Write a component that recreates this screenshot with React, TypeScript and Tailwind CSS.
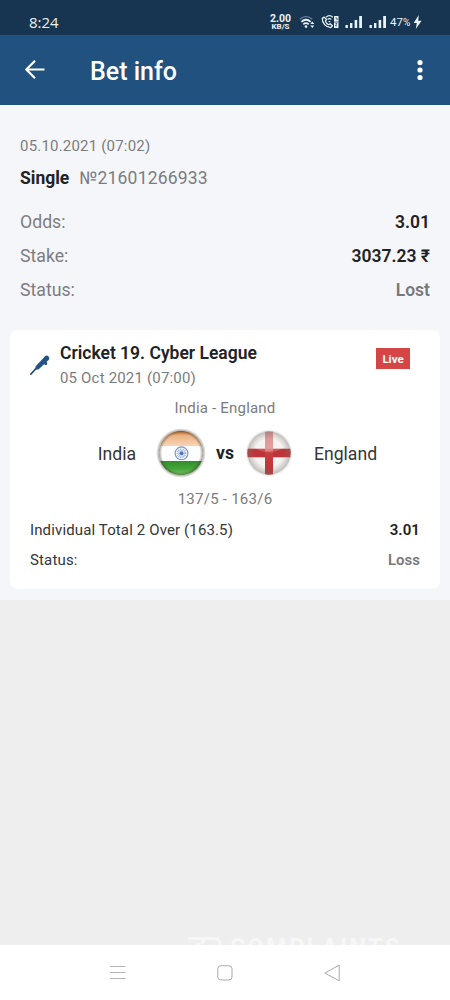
import type { ReactNode } from 'react';

function StatusBar() {
  return (
    <div className="h-[35px] bg-[#173451] text-[#e6f3f7] flex items-center pl-[29px] pr-[28px] pt-[9px]">
      <span className="font-['Open_Sans'] text-[15px] leading-[26px]">8:24</span>
      <div className="ml-auto flex items-center">
        <div className="w-[21px] mr-[8px] flex flex-col items-center font-bold whitespace-nowrap">
          <span className="text-[10.5px] leading-[9px]">2.00</span>
          <span className="text-[8px] leading-[8px]">KB/S</span>
        </div>
        <WifiIcon />
        <CallIcon />
        <SignalIcon />
        <SignalIcon />
        <span className="-ml-[3px] w-[23px] text-[11.5px] leading-[26px] whitespace-nowrap">
          47<span className="text-[10px]">%</span>
        </span>
        <svg width="9" height="16" viewBox="0 0 9 16" className="shrink-0">
          <path d="M5.8 1 0.6 9h3.2L2.8 15 8.6 6.8H5.2z" fill="currentColor" />
        </svg>
      </div>
    </div>
  );
}

function WifiIcon() {
  return (
    <svg width="16" height="14" viewBox="0 0 16 14" className="mr-[6px] shrink-0" fill="none" stroke="currentColor">
      <path d="M0.8 4.2C4.5 0.8 9.5 0.8 13.2 4.2" strokeWidth="1.3" opacity="0.4" />
      <path d="M2.4 6.8C5.3 4.2 8.8 4.2 11.7 6.8M4.3 9.3c1.8-1.6 3.6-1.6 5.4 0" strokeWidth="1.8" />
      <circle cx="7" cy="11.6" r="1.3" fill="currentColor" stroke="none" />
      <path d="M13.3 6.6l2 2.5h-4zM13.3 13l2-2.5h-4z" fill="currentColor" stroke="none" />
    </svg>
  );
}

function CallIcon() {
  return (
    <svg width="18" height="14" viewBox="0 0 18 14" className="mr-[6px] shrink-0" fill="none" stroke="currentColor">
      <path
        d="M3.2 2.1 1.3 3.4C1 7.8 5 12.4 9.7 12.6l1.7-1.9-2.2-2-1.7 1C6 8.9 4.9 7.6 4.4 6.1l1.1-1.6z"
        strokeWidth="1.3"
        strokeLinejoin="round"
      />
      <path d="M5 2.2c2.1-1.8 4.7-1.8 6.8 0M6.5 4.4c1.2-1 2.6-1 3.8 0" strokeWidth="1.2" />
      <path d="M8.4 7.4 7.1 5.9h2.6z" fill="currentColor" stroke="none" />
      <rect x="13" y="1" width="4.5" height="12" rx="0.5" fill="currentColor" stroke="none" />
      <path d="M14.5 3h1.5v2.2M14.4 8.4h1.6l-1.6 2.4H16M13 7h4.5" stroke="#173451" strokeWidth="0.7" />
    </svg>
  );
}

function SignalIcon() {
  return (
    <svg width="18" height="14" viewBox="0 0 18 14" className="mr-[6px] shrink-0" fill="currentColor">
      <rect x="0.5" y="10" width="2.4" height="3" />
      <rect x="5" y="8" width="2.4" height="5" />
      <rect x="9.6" y="5" width="2.6" height="8" />
      <rect x="14.2" y="1" width="2.8" height="12" />
    </svg>
  );
}

function Header() {
  return (
    <header className="h-[70px] bg-[#20517f] text-white flex items-center">
      <svg width="20" height="20" viewBox="0 0 20 20" className="ml-[25px] shrink-0" fill="none" stroke="currentColor" strokeWidth="2.2">
        <path d="M19.5 9.5H1.5M10 0.8 1.3 9.5 10 18.2" />
      </svg>
      <h1 className="ml-[45px] pt-[3px] text-[25px] leading-[30px] font-medium">Bet info</h1>
      <svg width="6" height="22" viewBox="0 0 6 22" className="ml-auto mr-[27px]" fill="currentColor">
        <circle cx="3" cy="3.5" r="2.6" />
        <circle cx="3" cy="11" r="2.6" />
        <circle cx="3" cy="18.5" r="2.6" />
      </svg>
    </header>
  );
}

interface SummaryRowProps {
  label: string;
  children: ReactNode;
  muted?: boolean;
}

function SummaryRow({ label, children, muted }: SummaryRowProps) {
  return (
    <div className="flex items-center justify-between h-[34px] text-[17.7px] text-[#7c7d80]">
      <span>{label}</span>
      <span className={muted ? 'text-[17.5px] font-semibold text-[#77787b]' : 'text-[17.5px] font-semibold text-[#212225]'}>
        {children}
      </span>
    </div>
  );
}

function CricketIcon() {
  return (
    <svg width="20" height="20" viewBox="0 0 20 20" className="shrink-0">
      <path d="M0.8 19.2 6.8 12.6" stroke="#20486f" strokeWidth="1.6" strokeLinecap="round" />
      <path d="M5.5 11.6 14.8 1.4c1.2-1.2 2.6-1.1 3.7 0 1.1 1.1 1.1 2.3 0.1 3.5L8.4 14.5 5.9 14.4z" fill="#215383" />
      <circle cx="15.7" cy="8.4" r="1.6" fill="#215383" />
    </svg>
  );
}

function IndiaFlag() {
  return (
    <svg width="50" height="50" viewBox="0 0 50 50">
      <defs>
        <clipPath id="india-clip">
          <circle cx="25" cy="25" r="22.3" />
        </clipPath>
        <linearGradient id="saffron" x1="0" y1="0" x2="0" y2="1">
          <stop offset="0" stopColor="#c4621c" />
          <stop offset="0.35" stopColor="#eab284" />
          <stop offset="1" stopColor="#f9d5b5" />
        </linearGradient>
        <linearGradient id="green" x1="0" y1="0" x2="0" y2="1">
          <stop offset="0" stopColor="#2f8d2c" />
          <stop offset="0.5" stopColor="#46a63b" />
          <stop offset="1" stopColor="#8bd07b" />
        </linearGradient>
        <radialGradient id="india-edge">
          <stop offset="0.85" stopColor="#3c3524" stopOpacity="0" />
          <stop offset="1" stopColor="#3c3524" stopOpacity="0.5" />
        </radialGradient>
        <radialGradient id="india-shadow">
          <stop offset="0.86" stopColor="#555" stopOpacity="0.65" />
          <stop offset="1" stopColor="#888" stopOpacity="0" />
        </radialGradient>
      </defs>
      <circle cx="25" cy="25" r="25" fill="url(#india-shadow)" />
      <g clipPath="url(#india-clip)">
        <rect width="50" height="50" fill="#fdfdfd" />
        <rect y="2" width="50" height="16" fill="url(#saffron)" />
        <rect y="33" width="50" height="16" fill="url(#green)" />
        <circle cx="25" cy="25" r="22.3" fill="url(#india-edge)" />
      </g>
      <g fill="none" stroke="#7592c8">
        <circle cx="25.5" cy="25.3" r="6.4" strokeWidth="1.1" />
        <circle cx="25.5" cy="25.3" r="3.6" strokeWidth="2.6" strokeDasharray="0.8 0.7" opacity="0.75" />
      </g>
      <circle cx="25.5" cy="25.3" r="2" fill="#4a76bc" />
    </svg>
  );
}

function EnglandFlag() {
  return (
    <svg width="50" height="50" viewBox="0 0 50 50">
      <defs>
        <clipPath id="england-clip">
          <circle cx="25" cy="25" r="21.7" />
        </clipPath>
        <linearGradient id="cross-v" x1="0" y1="0" x2="0" y2="1">
          <stop offset="0" stopColor="#cf7473" />
          <stop offset="0.4" stopColor="#df8c89" />
          <stop offset="0.5" stopColor="#c63f3f" />
          <stop offset="1" stopColor="#b92f32" />
        </linearGradient>
        <radialGradient id="england-edge">
          <stop offset="0.65" stopColor="#77716b" stopOpacity="0" />
          <stop offset="1" stopColor="#77716b" stopOpacity="0.42" />
        </radialGradient>
        <radialGradient id="england-shadow">
          <stop offset="0.88" stopColor="#777" stopOpacity="0.35" />
          <stop offset="1" stopColor="#999" stopOpacity="0" />
        </radialGradient>
      </defs>
      <circle cx="25" cy="25" r="23.6" fill="url(#england-shadow)" />
      <g clipPath="url(#england-clip)">
        <rect width="50" height="50" fill="#f4f2f0" />
        <rect y="20.7" width="50" height="8.6" fill="#bf3439" />
        <rect x="21" width="8" height="50" fill="url(#cross-v)" />
        <ellipse cx="25" cy="13" rx="18" ry="11" fill="#fff" opacity="0.18" />
        <circle cx="25" cy="25" r="21.7" fill="url(#england-edge)" />
      </g>
    </svg>
  );
}

function MatchCard() {
  return (
    <section className="mx-[10px] h-[259px] rounded-[8px] bg-white px-[20px] pt-[10px]">
      <div className="flex">
        <div className="w-[30px] pt-[15px]">
          <CricketIcon />
        </div>
        <div className="flex-1">
          <h2 className="text-[17.5px] leading-[26px] font-semibold text-[#212225]">Cricket 19. Cyber League</h2>
          <p className="text-[15px] leading-[24px] tracking-[0.18px] text-[#7b7b7d]">05 Oct 2021 (07:00)</p>
        </div>
        <span className="mt-[8px] mr-[10px] h-[21px] w-[34px] bg-[#d64545] text-center text-[11.5px] leading-[22px] font-bold text-white">
          Live
        </span>
      </div>

      <p className="mt-[6px] text-center text-[15px] leading-[25px] tracking-[0.2px] text-[#7b7b7d]">India - England</p>

      <div className="mt-[7px] flex h-[50px] items-center text-[17.6px] text-[#343538]">
        <span className="w-[106px] pt-[2px] text-right">India</span>
        <div className="ml-[20px]">
          <IndiaFlag />
        </div>
        <span className="w-[38px] pt-px text-center font-bold text-[#212225]">vs</span>
        <EnglandFlag />
        <span className="ml-[20px] pt-[2px]">England</span>
      </div>

      <p className="mt-[9px] text-center text-[15px] leading-[24px] tracking-[0.25px] text-[#7b7b7d]">137/5 - 163/6</p>

      <div className="mt-[4px] flex h-[30px] items-center justify-between text-[15px] text-[#343538]">
        <span className="tracking-[0.13px]">Individual Total 2 Over (163.5)</span>
        <span className="font-semibold tracking-[0.1px] text-[#212225]">3.01</span>
      </div>
      <div className="flex h-[31px] items-center justify-between text-[15px] text-[#343538]">
        <span className="tracking-[0.15px]">Status:</span>
        <span className="font-semibold text-[#77787b]">Loss</span>
      </div>
    </section>
  );
}

function Watermark() {
  return (
    <div className="ml-[187px] flex h-[9px] overflow-hidden text-[#f7f7f7]">
      <svg width="38" height="9" viewBox="0 0 38 9" className="shrink-0" fill="none" stroke="currentColor" strokeWidth="2.6">
        <path d="M1 2.5h23c7 0 10 1.5 9 7M12 3c7 0 7 4-4 6" />
      </svg>
      <span className="ml-[5px] text-[23px] leading-[23px] font-bold tracking-[2.7px]">COMPLAINTS</span>
    </div>
  );
}

function NavBar() {
  return (
    <nav className="flex h-[55px] items-center bg-white">
      <svg width="16" height="16" viewBox="0 0 16 16" className="ml-[110px]" stroke="#b5b5b5" strokeWidth="1">
        <path d="M0 1.5h15.5M0 7.5h15.5M0 13.5h15.5" />
      </svg>
      <svg width="16" height="16" viewBox="0 0 16 16" className="ml-[91px]" fill="none" stroke="#aaa">
        <rect x="0.8" y="0.8" width="14.2" height="14.2" rx="3" />
      </svg>
      <svg width="17" height="18" viewBox="0 0 17 18" className="ml-[91px]" fill="none" stroke="#aaa" strokeLinejoin="round">
        <path d="M0.8 9 15.2 1.2v15.6z" />
      </svg>
    </nav>
  );
}

export default function App() {
  return (
    <main className="flex h-[1000px] w-[450px] flex-col overflow-hidden bg-[#eeeeee] font-[Roboto,sans-serif]">
      <StatusBar />
      <Header />

      <div className="h-[495px] bg-[#f5f6fa] pt-[28px]">
        <div className="px-[20px]">
          <p className="h-[26px] text-[15px] leading-[26px] tracking-[0.2px] text-[#7b7c80]">05.10.2021 (07:02)</p>
          <p className="mt-[6px] flex h-[26px] gap-[10px] text-[17.5px] leading-[27px] text-[#7b7c80]">
            <span className="font-bold text-[#212225]">Single</span>
            <span className="tracking-[0.2px]">№21601266933</span>
          </p>
          <div className="mt-[14px] mb-[23px]">
            <SummaryRow label="Odds:">3.01</SummaryRow>
            <SummaryRow label="Stake:">3037.23 ₹</SummaryRow>
            <SummaryRow label="Status:" muted>Lost</SummaryRow>
          </div>
        </div>
        <MatchCard />
      </div>

      <div className="mt-auto">
        <Watermark />
        <NavBar />
      </div>
    </main>
  );
}
